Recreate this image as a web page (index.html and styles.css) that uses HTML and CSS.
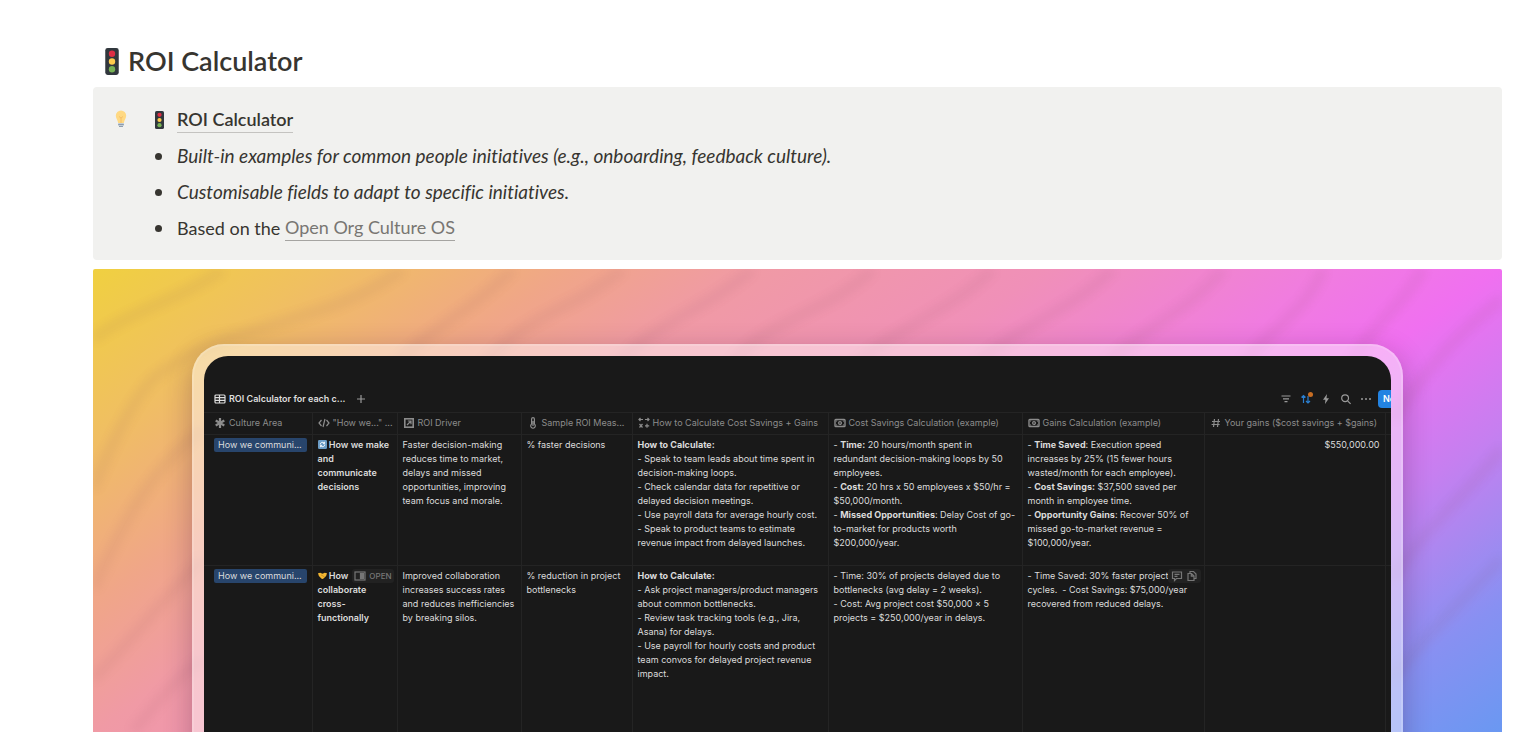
FILE: index.html
```html
<!DOCTYPE html>
<html lang="en">
<head>
    <meta charset="utf-8" />
    <meta name="viewport" content="width=device-width, initial-scale=1" />
    <title>ROI Calculator</title>
    <link rel="stylesheet" href="styles.css">
</head>

<body>
    <!-- shared shapes -->
    <svg class="sprite" aria-hidden="true">
        <symbol id="light" viewBox="0 0 14 28">
            <rect x="0" y="0" width="14" height="28" rx="2.5" fill="#31373d" />
            <circle cx="7" cy="6" r="3.3" fill="#dd2e44" />
            <circle cx="7" cy="14" r="3.3" fill="#ffcc4d" />
            <circle cx="7" cy="22" r="3.3" fill="#77b255" />
        </symbol>
        <symbol id="money" viewBox="0 0 12 12">
            <rect x="1" y="2.5" width="10" height="7" rx="0.8" fill="none" stroke="currentColor" stroke-width="1.4" />
            <circle cx="6" cy="6" r="1.4" fill="none" stroke="currentColor" stroke-width="1.2" />
            <path d="M2 3.5h1.600L2 5zM10 3.500H8.400L10 5zM2 8.500h1.600L2 7zM10 8.500H8.400L10 7z" fill="currentColor" stroke="none" />
        </symbol>
    </svg>

    <main class="page">
        <h1 class="title">
            <svg class="title-icon"><use href="#light" /></svg>
            ROI Calculator
        </h1>

        <section class="callout">
            <svg class="bulb" viewBox="0 0 12 18">
                <path d="M6 0.500a5.200 5.200 0 0 0-5.200 5.200c0 2.600 2 4 2.400 7.300h5.600c.4-3.300 2.400-4.700 2.400-7.300A5.200 5.200 0 0 0 6 .5z" fill="#ffd983" />
                <path d="M4 6.500l2 1.500 2-1.500M6 8v5" stroke="#f4b860" stroke-width="0.800" fill="none" />
                <rect x="3.200" y="13" width="5.600" height="3" fill="#c3cdd6" />
                <path d="M3.200 14.500h5.600M4 16.500h4" stroke="#8f9eae" stroke-width="1" />
            </svg>
            <div class="callout-body">
                <div class="row">
                    <svg class="row-icon"><use href="#light" /></svg>
                    <a class="strong-link" href="#">ROI Calculator</a>
                </div>
                <ul class="list">
                    <li><em>Built-in examples for common people initiatives (e.g., onboarding, feedback culture).</em></li>
                    <li><em>Customisable fields to adapt to specific initiatives.</em></li>
                    <li>Based on the <a class="soft-link" href="#">Open Org Culture OS</a></li>
                </ul>
            </div>
        </section>

        <section class="hero">
            <svg class="waves" viewBox="0 0 1409 463" preserveAspectRatio="none" aria-hidden="true">
                <g fill="none" stroke="#8a4a5a">
                    <path d="M130 0C90 30 40 40 0 70" />
                    <path d="M310 0C230 60 130 50 60 110C40 130 20 170 0 220" />
                    <path d="M420 0C370 50 330 60 290 110" />
                    <path d="M110 160C70 190 40 230 0 320" />
                    <path d="M110 290C70 330 40 370 0 410" />
                    <path d="M110 390C80 410 60 440 40 463" />
                    <path d="M530 0C470 50 430 40 380 110" />
                    <path d="M660 0C600 50 560 50 510 110" />
                    <path d="M780 0C730 50 660 50 630 110" />
                    <path d="M900 0C850 50 790 60 750 110" />
                    <path d="M1020 0C970 50 910 60 870 110" />
                    <path d="M1130 0C1090 50 1040 60 1000 110" />
                    <path d="M1230 0C1210 50 1170 60 1140 110" />
                    <path d="M1330 0C1300 50 1280 50 1250 110" />
                    <path d="M1409 30C1370 60 1340 90 1300 150" />
                    <path d="M1409 180C1370 230 1330 260 1300 310" />
                    <path d="M1409 290C1370 330 1330 370 1300 410" />
                </g>
            </svg>

            <div class="screen">
                <div class="panel">
                    <div class="toolbar">
                        <svg class="icon table-icon" viewBox="0 0 12 12"><path d="M2 2h8a1 1 0 0 1 1 1v6a1 1 0 0 1-1 1H2a1 1 0 0 1-1-1V3a1 1 0 0 1 1-1zM1 4.600h10M1 7.300h10M5.500 2v8" /></svg>
                        <span class="view-name">ROI Calculator for each c...</span>
                        <button class="tool add" aria-label="Add view"><svg class="icon" viewBox="0 0 12 12"><path d="M6 2v8M2 6h8" /></svg></button>
                        <div class="tools">
                            <button class="tool" aria-label="Filter"><svg class="icon" viewBox="0 0 12 12"><path d="M1.500 3h9M3 5.800h6M4.500 8.600h3" /></svg></button>
                            <button class="tool sort" aria-label="Sort"><svg class="icon" viewBox="0 0 12 12"><path d="M3.500 10V2.500M1.500 4.500l2-2 2 2M8 3v7M6 8l2 2 2-2" /></svg></button>
                            <button class="tool bolt" aria-label="Automations"><svg class="icon" viewBox="0 0 12 12"><path d="M7 1L3 6.800h2.400L5 11l4-5.800H6.500z" /></svg></button>
                            <button class="tool" aria-label="Search"><svg class="icon" viewBox="0 0 12 12"><path d="M8.500 5.200a3.400 3.400 0 1 1-6.800 0 3.400 3.400 0 0 1 6.800 0zM7.600 7.800l3 3" /></svg></button>
                            <button class="tool dots" aria-label="More"><svg class="icon" viewBox="0 0 12 12"><circle cx="2" cy="6" r="1" /><circle cx="6" cy="6" r="1" /><circle cx="10" cy="6" r="1" /></svg></button>
                        </div>
                        <button class="new-btn">New</button>
                    </div>

                    <table class="grid">
                        <colgroup>
                            <col class="c-area"><col class="c-how"><col class="c-driver"><col class="c-measure">
                            <col class="c-calc"><col class="c-cost"><col class="c-gains"><col><col class="c-end">
                        </colgroup>
                        <thead>
                            <tr>
                                <th><div class="head"><svg class="icon" viewBox="0 0 12 12"><path d="M6 1v10M1.700 3.500l8.600 5M10.300 3.500l-8.600 5" stroke-width="2.200" /></svg>Culture Area</div></th>
                                <th><div class="head"><svg class="icon" viewBox="0 0 12 12"><path d="M3.500 3L1 6l2.500 3M8.500 3L11 6 8.500 9M7 2L5 10" /></svg>"How we..." ...</div></th>
                                <th><div class="head"><svg class="icon" viewBox="0 0 12 12"><rect x="1.800" y="1.800" width="8.400" height="8.400" stroke-width="1.600" /><path d="M4 8l4-4M4.800 4H8v3.200" /></svg>ROI Driver</div></th>
                                <th><div class="head"><svg class="icon" viewBox="0 0 12 12"><path d="M4.600 7V2a1.400 1.400 0 0 1 2.800 0v5a2.300 2.300 0 1 1-2.800 0zM6 4v5" /></svg>Sample ROI Meas...</div></th>
                                <th><div class="head"><svg class="icon" viewBox="0 0 12 12"><path d="M1 2.500h4M2.500 1L1 2.500 2.500 4M7 2.500h4M9.500 1l1.500 1.500L9.500 4M1.500 7l3 3.500M4.500 7l-3 3.500M7 8.800h4.200M9 6.800v4" /></svg>How to Calculate Cost Savings + Gains</div></th>
                                <th><div class="head"><svg class="icon"><use href="#money" /></svg>Cost Savings Calculation (example)</div></th>
                                <th><div class="head"><svg class="icon"><use href="#money" /></svg>Gains Calculation (example)</div></th>
                                <th><div class="head"><svg class="icon" viewBox="0 0 12 12"><path d="M4.500 2l-1 8M8.500 2l-1 8M2 4.500h8M1.600 7.500h8" /></svg>Your gains ($cost savings + $gains)</div></th>
                                <th></th>
                            </tr>
                        </thead>
                        <tbody>
                            <tr class="first">
                                <td><span class="tag">How we communi...</span></td>
                                <td class="name"><svg class="emoji" viewBox="0 0 10 10"><rect width="10" height="10" rx="1.500" fill="#6b9cc6" /><path d="M2.500 5a2.500 2.500 0 0 1 4.500-1.500M7.500 5A2.500 2.500 0 0 1 3 6.500M7.300 2v2H5.500M2.700 8V6h1.800" stroke="#fff" fill="none" /></svg> How we make<br>and<br>communicate<br>decisions</td>
                                <td>Faster decision-making<br>reduces time to market,<br>delays and missed<br>opportunities, improving<br>team focus and morale.</td>
                                <td>% faster decisions</td>
                                <td><b>How to Calculate:</b><br>- Speak to team leads about time spent in<br>decision-making loops.<br>- Check calendar data for repetitive or<br>delayed decision meetings.<br>- Use payroll data for average hourly cost.<br>- Speak to product teams to estimate<br>revenue impact from delayed launches.</td>
                                <td>- <b>Time:</b> 20 hours/month spent in<br>redundant decision-making loops by 50<br>employees.<br>- <b>Cost:</b> 20 hrs x 50 employees x $50/hr =<br>$50,000/month.<br>- <b>Missed Opportunities</b>: Delay Cost of go-<br>to-market for products worth<br>$200,000/year.</td>
                                <td>- <b>Time Saved</b>: Execution speed<br>increases by 25% (15 fewer hours<br>wasted/month for each employee).<br>- <b>Cost Savings:</b> $37,500 saved per<br>month in employee time.<br>- <b>Opportunity Gains</b>: Recover 50% of<br>missed go-to-market revenue =<br>$100,000/year.</td>
                                <td class="amount">$550,000.00</td>
                                <td></td>
                            </tr>
                            <tr class="second">
                                <td><span class="tag">How we communi...</span></td>
                                <td class="name">
                                    <svg class="emoji" viewBox="0 0 10 10"><path d="M0 2.500l2.500-.5L5 3l2.500-1 2.500.5-1 3L5.500 9 4 8.500 1 5.500z" fill="#f2b632" /><path d="M3.500 4.500l2 1 2 1.500" stroke="#b97f16" stroke-width="0.700" fill="none" /></svg> How<br>collaborate<br>cross-<br>functionally
                                    <button class="hover-btn open"><svg class="icon" viewBox="0 0 12 12"><rect x="1" y="2" width="10" height="8" /><rect class="solid" x="6.500" y="3.500" width="3" height="5" /></svg>OPEN</button>
                                </td>
                                <td>Improved collaboration<br>increases success rates<br>and reduces inefficiencies<br>by breaking silos.</td>
                                <td>% reduction in project<br>bottlenecks</td>
                                <td><b>How to Calculate:</b><br>- Ask project managers/product managers<br>about common bottlenecks.<br>- Review task tracking tools (e.g., Jira,<br>Asana) for delays.<br>- Use payroll for hourly costs and product<br>team convos for delayed project revenue<br>impact.</td>
                                <td>- Time: 30% of projects delayed due to<br>bottlenecks (avg delay = 2 weeks).<br>- Cost: Avg project cost $50,000 × 5<br>projects = $250,000/year in delays.</td>
                                <td class="noted">- Time Saved: 30% faster project<br>cycles. &nbsp;- Cost Savings: $75,000/year<br>recovered from reduced delays.
                                    <span class="hover-btn notes">
                                        <button class="tool" aria-label="Comment"><svg class="icon" viewBox="0 0 12 12"><path d="M1.500 2h9v6.500h-5l-2 2v-2h-2zM3.500 4.300h5M3.500 6.300h3" /></svg></button>
                                        <button class="tool" aria-label="Copy"><svg class="icon" viewBox="0 0 12 12"><path d="M4 3V1.500h3.500l2.500 2.500v4.500H8M2 3.500h3.500l2.500 2.500v4.500H2zM5.300 3.500v2.700H8" /></svg></button>
                                    </span>
                                </td>
                                <td></td>
                                <td></td>
                            </tr>
                        </tbody>
                    </table>
                </div>
            </div>
        </section>
    </main>
</body>
</html>
```

FILE: styles.css
```css
* {
    box-sizing: border-box;
}

body {
    margin: 0;
    background-color: #fff;
    color: #373530;
    font-family: Lato, "Liberation Sans", sans-serif;
    font-variant-ligatures: none;
}

button {
    margin: 0;
    padding: 0;
    border: none;
    background: none;
    color: inherit;
    font: inherit;
    cursor: pointer;
}

.sprite {
    display: none;
}

.page {
    display: flex;
    flex-direction: column;
    height: 100vh;
    padding: 42px 38px 0 93px;
}

/* heading */
.title {
    display: flex;
    align-items: center;
    gap: 9px;
    margin: 0;
    padding: 0 12px 7px;
    font-size: 27px;
    line-height: 38px;
    font-weight: 600;
}

.title-icon {
    width: 14px;
    height: 27px;
}

/* callout */
.callout {
    display: flex;
    gap: 28px;
    margin-bottom: 9px;
    padding: 14px 22px;
    border-radius: 4px;
    background-color: #f1f1ef;
    font-size: 18px;
    line-height: 36px;
}

.bulb {
    width: 12px;
    height: 18px;
    margin-top: 9px;
}

.row {
    display: flex;
    align-items: center;
    gap: 13px;
    height: 37px;
}

.row-icon {
    width: 9px;
    height: 18px;
}

.list {
    margin: 0;
    padding: 0;
    list-style: none;
}

.list li {
    display: flex;
    align-items: center;
    white-space: pre;
}

.list li::before {
    content: "";
    width: 7px;
    height: 7px;
    margin-right: 15px;
    border-radius: 50%;
    background-color: #373530;
}

.list em {
    font-size: 19px;
}

.strong-link,
.soft-link {
    border-bottom: 1px solid #c4c3c0;
    color: inherit;
    line-height: 25px;
    text-decoration: none;
}

.strong-link {
    font-weight: 600;
}

.soft-link {
    border-color: #a5a4a1;
    color: #787672;
}

/* hero picture */
.hero {
    position: relative;
    flex: 1;
    min-height: 0;
    overflow: hidden;
    padding: 75px 99px 0;
    border-radius: 2px 2px 0 0;
    background: linear-gradient(145deg, #f0d040 0%, #f0c060 11%, #f0a688 23%, #f09aa5 32%, #f090b8 46%, #f07ce0 60%, #f070f0 68%, #c67ff0 79%, #a888f0 85%, #8890f2 91%, #6a98f2 100%);
}

.waves {
    position: absolute;
    inset: 0;
    width: 100%;
    height: 100%;
    opacity: 0.07;
    stroke-width: 12;
    filter: blur(4px);
}

.screen {
    position: relative;
    height: 600px;
    padding: 12px;
    border-radius: 32px;
    background-color: rgba(255, 255, 255, 0.45);
    box-shadow: inset 0 0 0 2px rgba(255, 255, 255, 0.15), 0 8px 28px rgba(60, 20, 50, 0.3);
}

.panel {
    height: 100%;
    overflow: hidden;
    padding-top: 32px;
    border-radius: 24px 24px 0 0;
    background-color: #191919;
    color: #dcdcdc;
    font-family: Inter, "Liberation Sans", sans-serif;
    font-size: 9px;
    line-height: 14px;
}

.icon {
    flex: none;
    width: 12px;
    height: 12px;
    fill: none;
    stroke: currentColor;
    stroke-width: 1.2px;
}

.tool {
    display: flex;
}

.toolbar {
    display: flex;
    align-items: center;
    height: 24px;
    padding: 0 0 2px 10px;
    color: #9a9a9a;
}

.table-icon {
    color: #dedede;
}

.view-name {
    margin: 0 10px 0 3px;
    color: #dedede;
    font-weight: 600;
}

.tools {
    display: flex;
    gap: 8px;
    margin-left: auto;
}

.sort {
    position: relative;
    color: #2a7fd0;
}

.sort::after {
    content: "";
    position: absolute;
    top: -1px;
    right: -1px;
    width: 5px;
    height: 5px;
    border-radius: 50%;
    background-color: #c76d23;
}

.bolt .icon,
.dots .icon {
    fill: currentColor;
    stroke: none;
}

.new-btn {
    width: 13px;
    height: 18px;
    margin-left: 6px;
    overflow: hidden;
    padding-left: 5px;
    border-radius: 4px 0 0 4px;
    background-color: #2383e2;
    color: #fff;
    font-weight: 600;
    text-align: left;
}

/* table */
.grid {
    width: 100%;
    border-collapse: collapse;
    table-layout: fixed;
}

.c-area { width: 108px; }
.c-how { width: 85px; }
.c-driver { width: 124px; }
.c-measure { width: 111px; }
.c-calc { width: 196px; }
.c-cost { width: 194px; }
.c-gains { width: 182px; }
.c-end { width: 6px; }

.grid th,
.grid td {
    padding: 0 5px;
    border: 1px solid #242424;
    text-align: left;
    vertical-align: top;
    white-space: nowrap;
}

.grid th:first-child,
.grid td:first-child {
    padding-left: 10px;
    border-left: none;
}

.grid th:last-child,
.grid td:last-child {
    padding: 0;
    border-right: none;
}

.grid th {
    height: 22px;
    padding-bottom: 2px;
    color: #8c8c8c;
    font-weight: 400;
    vertical-align: middle;
}

.head {
    display: flex;
    align-items: center;
    gap: 3px;
}

.grid td {
    padding-top: 3px;
}

.first {
    height: 131px;
}

.second {
    height: 300px;
}

.tag {
    display: block;
    padding: 0 4px;
    border-radius: 2px;
    background-color: #28456c;
}

.name {
    position: relative;
    font-weight: 600;
}

.emoji {
    width: 9px;
    height: 9px;
    vertical-align: -1px;
}

.grid .amount {
    text-align: right;
}

.noted {
    position: relative;
}

.hover-btn {
    display: flex;
    align-items: center;
    position: absolute;
    top: 3px;
    right: 3px;
    height: 14px;
    border-radius: 3px;
    background-color: #222;
    color: #777;
}

.open {
    gap: 3px;
    padding: 0 2px;
    font-size: 8px;
    font-weight: 500;
}

.notes {
    gap: 3px;
    padding: 0 3px;
}

.solid {
    fill: currentColor;
}
```
